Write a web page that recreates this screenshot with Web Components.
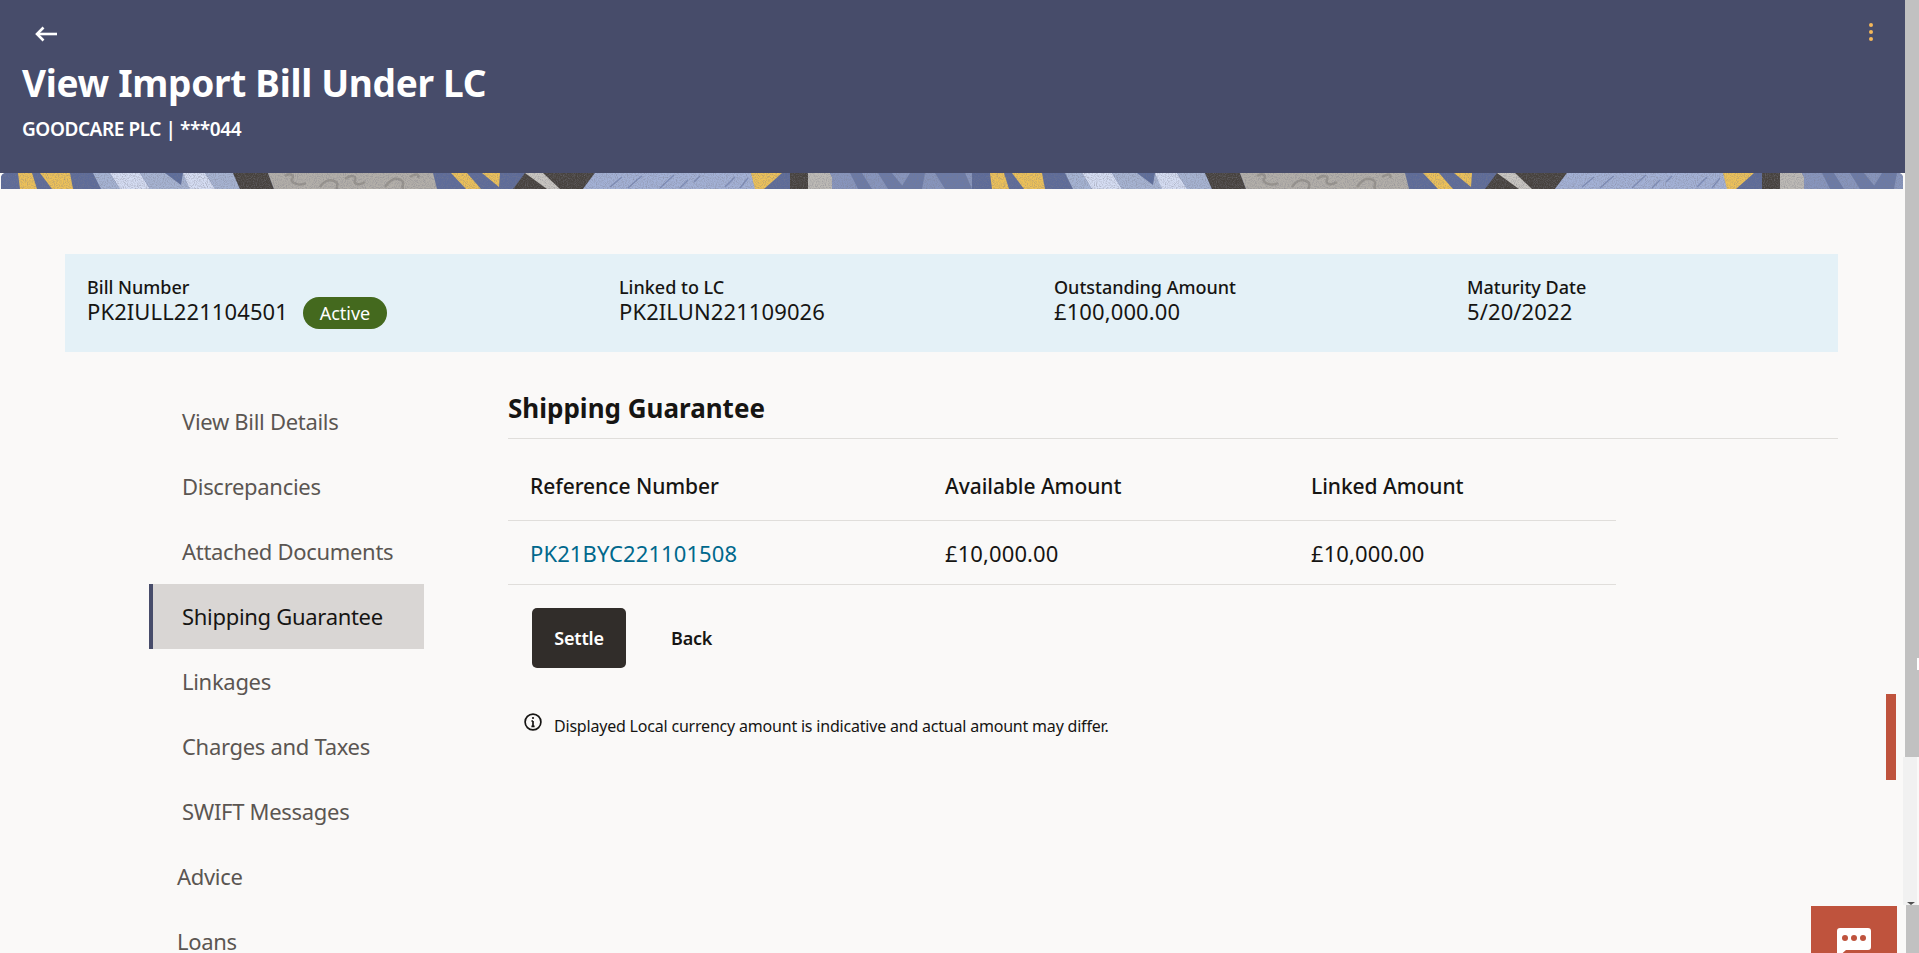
<!DOCTYPE html>
<html lang="en">
<head>
<meta charset="utf-8">
<title>View Import Bill Under LC</title>
<style>
    html, body {
        margin: 0;
        height: 953px;
        overflow: hidden;
        background: #faf9f8;
        font-family: "Noto Sans", "Open Sans", sans-serif;
        color: #161513;
    }
    app-shell { height: 953px; }
</style>
</head>
<body>
<app-shell>
    <page-banner slot="banner" heading="View Import Bill Under LC" sub="GOODCARE PLC | ***044"></page-banner>
    <bill-summary>
        <summary-field label="Bill Number" value="PK2IULL221104501"><status-pill>Active</status-pill></summary-field>
        <summary-field label="Linked to LC" value="PK2ILUN221109026"></summary-field>
        <summary-field label="Outstanding Amount" value="£100,000.00"></summary-field>
        <summary-field label="Maturity Date" value="5/20/2022"></summary-field>
    </bill-summary>
    <div slot="nav">
        <side-nav>
            <nav-item>View Bill Details</nav-item>
            <nav-item>Discrepancies</nav-item>
            <nav-item>Attached Documents</nav-item>
            <nav-item active>Shipping Guarantee</nav-item>
            <nav-item>Linkages</nav-item>
            <nav-item>Charges and Taxes</nav-item>
            <nav-item>SWIFT Messages</nav-item>
            <nav-item top>Advice</nav-item>
            <nav-item top>Loans</nav-item>
        </side-nav>
    </div>
    <guarantee-panel slot="main" heading="Shipping Guarantee"></guarantee-panel>
</app-shell>

<script>
const app_shell = document.createElement('template');
app_shell.innerHTML = `
<style>
    :host {
        display: flex;
        position: relative;
        overflow: hidden;
    }
    .page {
        width: 1905px;
        flex: none;
        display: flex;
        flex-direction: column;
        overflow: hidden;
    }
    .body {
        padding: 65px 67px 0 65px;
        display: flex;
        flex-direction: column;
    }
    .columns {
        display: flex;
        margin-top: 37px;
        padding-left: 84px;
    }
    .nav { width: 275px; flex: none; }
    .main { flex: 1; margin-left: 84px; }
    .rail {
        flex: 1;
        display: flex;
        flex-direction: column;
        position: relative;
    }
    .rail .upper { height: 757px; background: #c1c1c1; }
    .rail .track { height: 148px; background: #f1f1f1; margin: 0 2px 0 -2px; position: relative; }
    .rail .track::after {
        content: "";
        position: absolute;
        left: 4px;
        bottom: 0;
        border: 4px solid transparent;
        border-top: 3px solid #505050;
        border-bottom: 0;
    }
    .rail .lower { flex: 1; background: #c1c1c1; margin-left: 1px; }
    .rail .tick { position: absolute; right: 0; top: 658px; width: 2px; height: 12px; background: #fff; }
    .marker {
        position: absolute;
        left: 1886px;
        top: 694px;
        width: 10px;
        height: 86px;
        background: #bf533d;
    }
    .chat {
        position: absolute;
        left: 1811px;
        top: 906px;
        width: 86px;
        height: 47px;
        background: #bf533d;
        overflow: hidden;
    }
    .chat svg { position: absolute; left: 26px; top: 22px; }
</style>
<div class="page">
    <slot name="banner"></slot>
    <div class="body">
        <slot></slot>
        <div class="columns">
            <div class="nav"><slot name="nav"></slot></div>
            <div class="main"><slot name="main"></slot></div>
        </div>
    </div>
</div>
<div class="rail">
    <div class="upper"></div>
    <div class="track"></div>
    <div class="lower"></div>
    <div class="tick"></div>
</div>
<div class="marker"></div>
<div class="chat">
    <svg width="34" height="34" viewBox="0 0 34 34">
        <path d="M3 0H31a3 3 0 0 1 3 3V19a3 3 0 0 1-3 3H9L0 30V3a3 3 0 0 1 3-3Z" fill="#fff"/>
        <circle cx="8" cy="10" r="3" fill="#bf533d"/>
        <circle cx="17" cy="10" r="3" fill="#bf533d"/>
        <circle cx="26" cy="10" r="3" fill="#bf533d"/>
    </svg>
</div>
`;
customElements.define('app-shell', class extends HTMLElement {
    constructor() {
        super();
        this.attachShadow({ mode: 'open' }).appendChild(app_shell.content.cloneNode(true));
    }
});

const page_banner = document.createElement('template');
page_banner.innerHTML = `
<style>
    :host { display: block; }
    .top {
        height: 173px;
        box-sizing: border-box;
        background: #474c6a;
        color: #fff;
        padding: 22px 31px 0 22px;
    }
    .row {
        display: flex;
        justify-content: space-between;
        align-items: flex-start;
        height: 18px;
    }
    .back { margin: 4px 0 0 13px; display: block; }
    .more { display: block; }
    h1 {
        margin: 18px 0 0;
        font-size: 37px;
        line-height: 50px;
        font-weight: 700;
        letter-spacing: -0.3px;
    }
    .sub {
        margin-top: 8px;
        font-size: 19px;
        line-height: 26px;
        font-weight: 600;
        letter-spacing: -0.43px;
    }
    .strip {
        height: 16px;
        margin: 0 2px 0 1px;
        border-radius: 5px 5px 0 0;
        overflow: hidden;
        background: #5d6b99;
    }
    .strip svg { display: block; filter: blur(0.5px); }
</style>
<div class="top">
    <div class="row">
        <svg class="back" width="22" height="16" viewBox="0 0 22 16" fill="none" stroke="#fff" stroke-width="2.6">
            <path d="M22 8H2"/><path d="M8.5 1.5L2 8l6.5 6.5"/>
        </svg>
        <svg class="more" width="6" height="20" viewBox="0 0 6 20" fill="#f5b859">
            <circle cx="3" cy="3" r="2"/><circle cx="3" cy="10" r="2"/><circle cx="3" cy="17" r="2"/>
        </svg>
    </div>
    <h1></h1>
    <div class="sub"></div>
</div>
<div class="strip">
    <svg width="1902" height="16">
        <defs>
            <filter id="grain" x="0" y="0" width="100%" height="100%">
                <feTurbulence type="fractalNoise" baseFrequency="0.9" numOctaves="2" seed="4"/>
                <feColorMatrix values="0 0 0 0 0.2  0 0 0 0 0.2  0 0 0 0 0.25  0 0 0 1.1 -0.45"/>
            </filter>
            <pattern id="tile" width="972" height="16" patternUnits="userSpaceOnUse" x="-1">
                <rect width="972" height="16" fill="#5d6b99"/>
                <polygon points="18,0 32,0 37,16 20,16" fill="#edc158"/>
                <polygon points="40,0 70,0 73,16 52,16" fill="#edc158"/>
                <polygon points="93,0 110,0 120,16 101,16" fill="#a5b3d3"/>
                <polygon points="110,0 140,0 150,16 120,16" fill="#d5ddf3"/>
                <polygon points="140,0 205,0 215,16 150,16" fill="#a6b3d2"/>
                <polygon points="165,0 183,0 181,12" fill="#5d6d9b"/>
                <polygon points="183,0 205,0 215,16 190,16" fill="#d5ddf3"/>
                <polygon points="205,0 233,0 240,16 215,16" fill="#a6b3d2"/>
                <polygon points="233,0 268,0 274,16 240,16" fill="#47423e"/>
                <polygon points="268,0 433,0 437,16 274,16" fill="#b3afa9"/>
                <path d="M285 3c6-4 10 0 7 3s8 8 14 4M320 14c5-8 12-8 16-5s-2 7 2 7M345 6c6-5 12-3 10 1s4 6 10 2M385 14c6-8 10-10 16-7s-2 8 3 8M410 4c6-4 10-3 8 1" fill="none" stroke="#98948e" stroke-width="2.5"/>
                <polygon points="451,0 467,0 481,16 466,16" fill="#edc158"/>
                <polygon points="482,0 500,0 499,14" fill="#edc158"/>
                <polygon points="525,0 595,0 583,16 513,16" fill="#47423e"/>
                <polygon points="525,0 543,0 560,16 547,16" fill="#c9c6c1"/>
                <polygon points="595,0 751,0 756,16 583,16" fill="#a3b1d6"/>
                <path d="M610 14l12-10M628 15l10-9M642 3l-4 3M660 15l14-13M680 15l8-8M700 3l-6 6M725 14l10-10M748 5l-8 10" stroke="#7e8db8" stroke-width="1.5"/>
                <polygon points="751,0 782,0 764,16 755,16" fill="#edc158"/>
                <rect x="790" width="18" height="16" fill="#47423e"/>
                <polygon points="808,0 830,0 838,16 808,16" fill="#bdbab5"/>
                <rect x="832" width="140" height="16" fill="#8795bd"/>
                <polygon points="830,0 832,0 840,16 838,16" fill="#8795bd"/>
                <polygon points="850,0 862,0 872,16 858,16" fill="#6b7aa6"/>
                <polygon points="878,0 892,0 905,16 888,16" fill="#6b7aa6"/>
                <polygon points="910,0 925,0 922,16 900,16" fill="#6b7aa6"/>
                <polygon points="935,0 965,0 972,16 945,16" fill="#6b7aa6"/>
            </pattern>
        </defs>
        <rect width="1902" height="16" fill="url(#tile)"/>
        <rect width="1902" height="16" filter="url(#grain)"/>
    </svg>
</div>
`;
customElements.define('page-banner', class extends HTMLElement {
    constructor() {
        super();
        this.shadowDOM = this.attachShadow({ mode: 'open' });
        this.shadowDOM.appendChild(page_banner.content.cloneNode(true));
    }
    connectedCallback() {
        this.shadowDOM.querySelector('h1').textContent = this.getAttribute('heading');
        this.shadowDOM.querySelector('.sub').textContent = this.getAttribute('sub');
    }
});

const bill_summary = document.createElement('template');
bill_summary.innerHTML = `
<style>
    :host {
        display: grid;
        grid-template-columns: 532px 435px 413px 1fr;
        height: 98px;
        box-sizing: border-box;
        padding: 21px 0 0 22px;
        background: #e4f1f7;
    }
</style>
<slot></slot>
`;
customElements.define('bill-summary', class extends HTMLElement {
    constructor() {
        super();
        this.attachShadow({ mode: 'open' }).appendChild(bill_summary.content.cloneNode(true));
    }
});

const summary_field = document.createElement('template');
summary_field.innerHTML = `
<style>
    :host { display: block; }
    .label {
        font-size: 18px;
        line-height: 24px;
        font-weight: 500;
        color: #161513;
    }
    .value {
        display: flex;
        align-items: center;
        height: 28px;
        font-size: 22px;
        letter-spacing: 0.1px;
        color: #161513;
    }
    .value span { margin-bottom: 4px; }
    ::slotted(status-pill) { margin: 0 0 0 15px; }
</style>
<div class="label"></div>
<div class="value"><span></span><slot></slot></div>
`;
customElements.define('summary-field', class extends HTMLElement {
    constructor() {
        super();
        this.shadowDOM = this.attachShadow({ mode: 'open' });
        this.shadowDOM.appendChild(summary_field.content.cloneNode(true));
    }
    connectedCallback() {
        this.shadowDOM.querySelector('.label').textContent = this.getAttribute('label');
        this.shadowDOM.querySelector('span').textContent = this.getAttribute('value');
    }
});

const status_pill = document.createElement('template');
status_pill.innerHTML = `
<style>
    :host {
        display: inline-flex;
        align-items: center;
        justify-content: center;
        width: 84px;
        height: 32px;
        border-radius: 16px;
        background: #44691e;
        color: #fff;
        font-size: 18px;
        letter-spacing: 0;
    }
</style>
<slot></slot>
`;
customElements.define('status-pill', class extends HTMLElement {
    constructor() {
        super();
        this.attachShadow({ mode: 'open' }).appendChild(status_pill.content.cloneNode(true));
    }
});

const side_nav = document.createElement('template');
side_nav.innerHTML = `
<style>
    :host { display: flex; flex-direction: column; }
</style>
<slot></slot>
`;
customElements.define('side-nav', class extends HTMLElement {
    constructor() {
        super();
        this.attachShadow({ mode: 'open' }).appendChild(side_nav.content.cloneNode(true));
    }
});

const nav_item = document.createElement('template');
nav_item.innerHTML = `
<style>
    :host {
        display: flex;
        align-items: center;
        height: 65px;
        box-sizing: border-box;
        padding-left: 33px;
        padding-bottom: 2px;
        font-size: 22px;
        line-height: 22px;
        letter-spacing: -0.3px;
        color: #5b5652;
    }
    :host([active]) {
        padding-left: 29px;
        border-left: 4px solid #474c6a;
        background: #d9d6d4;
        color: #161513;
    }
    :host([top]) { padding-left: 28px; }
    /* last row stops at the bottom of the window */
    :host(:last-child) { height: 44px; padding-top: 19px; padding-bottom: 0; }
</style>
<slot></slot>
`;
customElements.define('nav-item', class extends HTMLElement {
    constructor() {
        super();
        this.attachShadow({ mode: 'open' }).appendChild(nav_item.content.cloneNode(true));
    }
});

const guarantee_panel = document.createElement('template');
guarantee_panel.innerHTML = `
<style>
    :host { display: block; }
    h2 {
        margin: 0;
        height: 50px;
        box-sizing: border-box;
        border-bottom: 1px solid #e0dedb;
        font-size: 26px;
        line-height: 24px;
        padding-top: 7px;
        font-weight: 700;
        color: #161513;
    }
    .table { width: 1108px; }
    .tr {
        display: grid;
        box-sizing: border-box;
        grid-template-columns: 415px 366px 1fr;
        padding-left: 22px;
        align-items: center;
        border-bottom: 1px solid #e0dedb;
    }
    .tr.head {
        height: 82px;
        padding-top: 12px;
        font-size: 21px;
        font-weight: 500;
        letter-spacing: -0.05px;
    }
    .tr.data {
        height: 64px;
        padding-top: 1px;
        font-size: 22px;
        letter-spacing: 0.1px;
    }
    a { color: #00688c; text-decoration: none; }
    .actions {
        display: flex;
        align-items: center;
        margin: 23px 0 0 24px;
    }
    button {
        font: inherit;
        font-size: 18px;
        font-weight: 600;
        letter-spacing: -0.2px;
        border: 0;
        background: none;
        color: #161513;
        cursor: pointer;
        padding: 0;
    }
    .primary {
        width: 94px;
        height: 60px;
        border-radius: 5px;
        background: #312d2a;
        color: #fff;
    }
    .plain { margin-left: 45px; }
    .note {
        display: flex;
        align-items: flex-start;
        margin: 46px 0 0 16px;
        font-size: 16px;
        line-height: 24px;
        letter-spacing: -0.2px;
        color: #161513;
    }
    .note svg { flex: none; margin: -1px 12px 0 0; }
</style>
<h2></h2>
<div class="table">
    <div class="tr head"><span>Reference Number</span><span>Available Amount</span><span>Linked Amount</span></div>
    <div class="tr data"><a href="#">PK21BYC221101508</a><span>£10,000.00</span><span>£10,000.00</span></div>
</div>
<div class="actions">
    <button class="primary">Settle</button>
    <button class="plain">Back</button>
</div>
<div class="note">
    <svg width="18" height="18" viewBox="0 0 18 18" fill="none" stroke="#161513" stroke-width="1.7">
        <circle cx="9" cy="9" r="7.9"/>
        <path d="M9 8v5.2M7.4 8H9M7.4 13.4h3.2"/>
        <circle cx="9" cy="5" r="1.1" fill="#161513" stroke="none"/>
    </svg>
    <span>Displayed Local currency amount is indicative and actual amount may differ.</span>
</div>
`;
customElements.define('guarantee-panel', class extends HTMLElement {
    constructor() {
        super();
        this.shadowDOM = this.attachShadow({ mode: 'open' });
        this.shadowDOM.appendChild(guarantee_panel.content.cloneNode(true));
    }
    connectedCallback() {
        this.shadowDOM.querySelector('h2').textContent = this.getAttribute('heading');
    }
});
</script>
</body>
</html>
